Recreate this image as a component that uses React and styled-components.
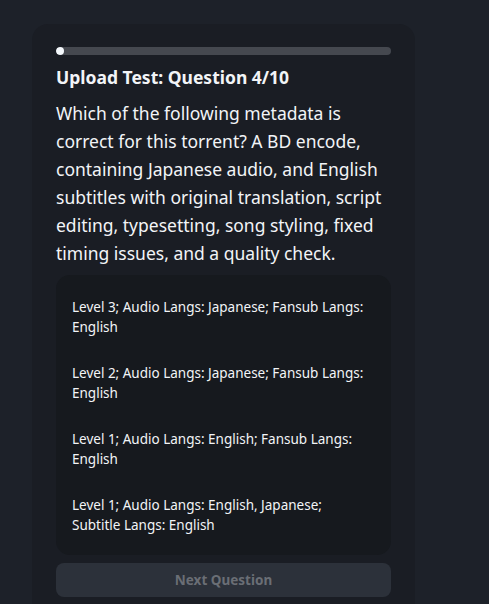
import React, { useState } from 'react';
import styled, { createGlobalStyle } from 'styled-components';

const GlobalStyle = createGlobalStyle`
  html, body {
    margin: 0;
    background: #1d2129;
    font-family: "Noto Sans", "Open Sans", sans-serif;
    color: #f2f4f7;
  }
`;

const Page = styled.div`
  min-height: 604px;
  padding: 24px 0 0 32px;
  box-sizing: border-box;
`;

const Card = styled.div`
  width: 383px;
  box-sizing: border-box;
  background: #1a1d24;
  border-radius: 16px 16px 0 0;
  padding: 23px 24px 8px;
`;

const Track = styled.div`
  height: 8px;
  border-radius: 4px;
  background: #45484f;
  overflow: hidden;
`;

const Fill = styled.div`
  height: 100%;
  min-width: 8px;
  border-radius: 4px;
  background: #f4f8fc;
`;

const Title = styled.h2`
  margin: 11px 0 0;
  font-size: 17.5px;
  font-weight: 700;
  line-height: 22px;
`;

const Prompt = styled.p`
  margin: 11px 0 0;
  font-size: 17.5px;
  line-height: 28px;
`;

const Options = styled.div`
  margin-top: 8px;
  background: #16191e;
  border-radius: 14px;
  padding: 22px 0 20px;
  display: flex;
  flex-direction: column;
  gap: 26px;
`;

const Option = styled.div`
  padding: 0 18px 0 16px;
  font-size: 13.5px;
  line-height: 20px;
  cursor: pointer;
  color: ${p => (p.$picked ? '#9ec5ff' : '#f2f4f7')};
`;

const NextButton = styled.button`
  margin-top: 8px;
  width: 100%;
  height: 34px;
  border: none;
  border-radius: 8px;
  background: #2c313a;
  color: #6a6e75;
  font-family: inherit;
  font-size: 13.5px;
  font-weight: 700;
  cursor: not-allowed;
`;

const answers = [
  'Level 3; Audio Langs: Japanese; Fansub Langs: English',
  'Level 2; Audio Langs: Japanese; Fansub Langs: English',
  'Level 1; Audio Langs: English; Fansub Langs: English',
  'Level 1; Audio Langs: English, Japanese; Subtitle Langs: English',
];

export default function App() {
  const [picked, setPicked] = useState(null);
  const progress = 0;

  return (
    <Page>
      <GlobalStyle />
      <Card>
        <Track>
          <Fill style={{ width: `${progress * 100}%` }} />
        </Track>
        <Title>Upload Test: Question 4/10</Title>
        <Prompt>
          Which of the following metadata is correct for this torrent? A BD encode,
          containing Japanese audio, and English subtitles with original translation,
          script editing, typesetting, song styling, fixed timing issues, and a quality check.
        </Prompt>
        <Options>
          {answers.map((a, i) => (
            <Option key={a} $picked={picked === i} onClick={() => setPicked(i)}>
              {a}
            </Option>
          ))}
        </Options>
        <NextButton disabled={picked === null}>Next Question</NextButton>
      </Card>
    </Page>
  );
}
